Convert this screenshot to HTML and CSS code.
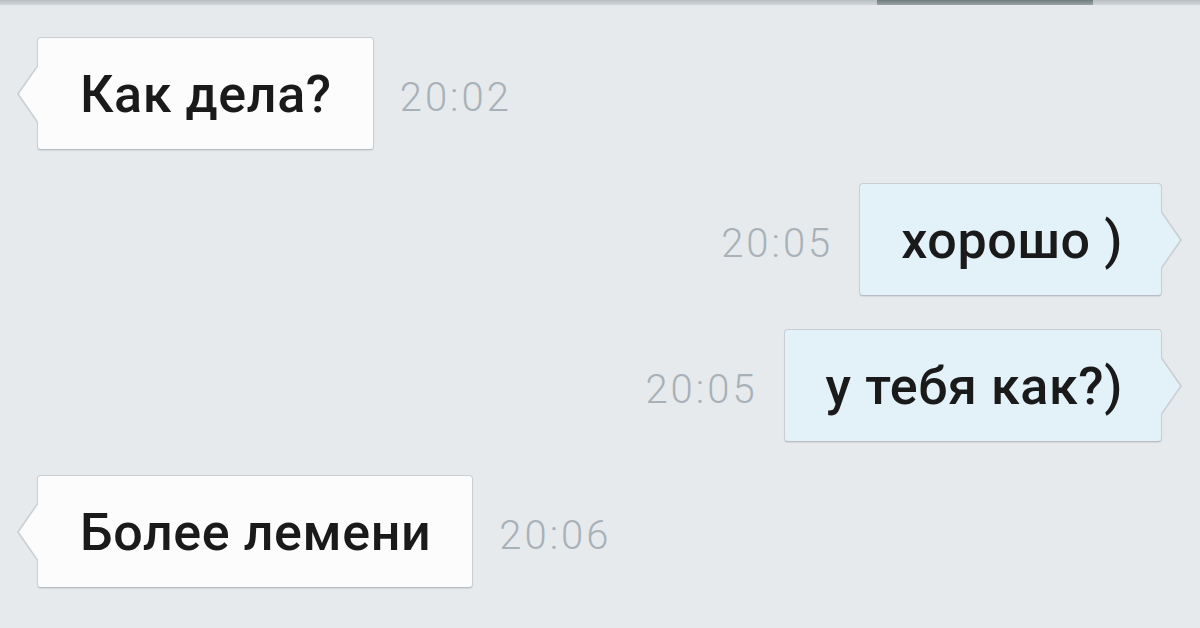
FILE: index.html
```html
<!DOCTYPE html>
<html lang="ru">
<head>
<meta charset="utf-8">
<title>Чат</title>
<link rel="stylesheet" href="styles.css">
</head>
<body>
<div class="topbar"><div class="tab"></div></div>
<main class="chat">
  <div class="row in">
    <div class="bubble">Как дела?</div>
    <span class="time">20:02</span>
  </div>
  <div class="row out">
    <span class="time">20:05</span>
    <div class="bubble">хорошо )</div>
  </div>
  <div class="row out">
    <span class="time">20:05</span>
    <div class="bubble">у тебя как?)</div>
  </div>
  <div class="row in">
    <div class="bubble">Более лемени</div>
    <span class="time">20:06</span>
  </div>
</main>
</body>
</html>
```
FILE: styles.css
```css
html, body {
  margin: 0;
  padding: 0;
  background: #e6eaed;
  width: 1200px;
  height: 628px;
  overflow: hidden;
  font-family: Roboto, "Liberation Sans", sans-serif;
}

.topbar {
  height: 5px;
  background: linear-gradient(#b9bec3, #d3d7db);
  display: flex;
  justify-content: flex-end;
  padding-right: 107px;
}

.tab {
  width: 216px;
  height: 5px;
  background: linear-gradient(#6f7c7e, #99a4a6);
}

.chat {
  display: flex;
  flex-direction: column;
  gap: 33px;
  padding: 32px 38px 0 37px;
}

.row {
  display: flex;
  align-items: center;
  gap: 26px;
}

.row.out {
  justify-content: flex-end;
  gap: 26px;
}

.bubble {
  position: relative;
  font-size: 52px;
  font-weight: 500;
  letter-spacing: 0.6px;
  line-height: 60px;
  color: #1a1a1a;
  padding: 27px 41px 24px 42px;
  border: 1px solid #c9ced3;
  border-bottom-color: #b7bdc3;
  border-radius: 4px;
  box-shadow: 0 1px 1px rgba(0, 0, 0, 0.08);
}

.in .bubble {
  background: #fcfcfc;
}

.out .bubble {
  background: #e3f1f9;
  padding-left: 41px;
  padding-right: 38px;
}

.bubble::before,
.bubble::after {
  content: "";
  position: absolute;
  top: 50%;
  width: 0;
  height: 0;
  border-top: 30px solid transparent;
  border-bottom: 30px solid transparent;
}

.in .bubble::before {
  left: -21px;
  margin-top: -30px;
  border-right: 21px solid #c9ced3;
}

.in .bubble::after {
  left: -19px;
  margin-top: -29px;
  border-top-width: 29px;
  border-bottom-width: 29px;
  border-right: 20px solid #fcfcfc;
}

.out .bubble::before {
  right: -21px;
  margin-top: -30px;
  border-left: 21px solid #c9ced3;
}

.out .bubble::after {
  right: -19px;
  margin-top: -29px;
  border-top-width: 29px;
  border-bottom-width: 29px;
  border-left: 20px solid #e3f1f9;
}

.time {
  font-size: 40px;
  font-weight: 300;
  color: #a9b1b8;
  margin-top: 8px;
  letter-spacing: 3px;
}
```
